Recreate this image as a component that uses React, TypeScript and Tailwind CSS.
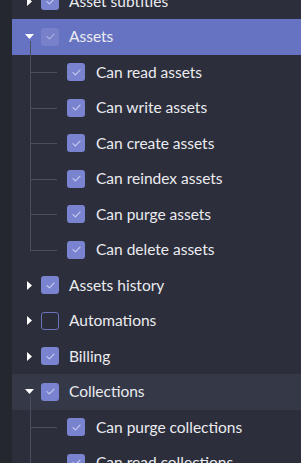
import React from "react";

interface Node {
  label: string;
  checked: boolean;
  caret?: "right" | "down";
  selected?: boolean;
  hover?: boolean;
  children?: string[];
}

const TREE: Node[] = [
  { label: "Asset subtitles", checked: true, caret: "right" },
  {
    label: "Assets",
    checked: true,
    caret: "down",
    selected: true,
    children: [
      "Can read assets",
      "Can write assets",
      "Can create assets",
      "Can reindex assets",
      "Can purge assets",
      "Can delete assets",
    ],
  },
  { label: "Assets history", checked: true, caret: "right" },
  { label: "Automations", checked: false, caret: "right" },
  { label: "Billing", checked: true, caret: "right" },
  {
    label: "Collections",
    checked: true,
    caret: "down",
    hover: true,
    children: ["Can purge collections", "Can read collections"],
  },
];

function Checkbox({ checked, onSelected }: { checked: boolean; onSelected?: boolean }) {
  if (!checked) {
    return (
      <span className="block w-[18px] h-[18px] rounded-[3px] border-[1.5px] border-[#6b73b9] bg-[#2a2d38] shrink-0" />
    );
  }
  return (
    <span
      className={
        "w-[18px] h-[18px] rounded-[3px] flex items-center justify-center shrink-0 " +
        (onSelected ? "bg-[#7780c9]" : "bg-[#7a83cf]")
      }
    >
      <svg width="9" height="7" viewBox="0 0 9 7" fill="none">
        <path
          d="M1 3.6 L3.4 5.8 L8 1.2"
          stroke={onSelected ? "#aeb4e4" : "#c9cdf0"}
          strokeWidth="1.1"
          strokeLinecap="round"
          strokeLinejoin="round"
        />
      </svg>
    </span>
  );
}

function Caret({ dir }: { dir: "right" | "down" }) {
  return dir === "right" ? (
    <svg width="5" height="9" viewBox="0 0 5 9">
      <path d="M0 0 L5 4.5 L0 9 Z" fill="#ffffff" />
    </svg>
  ) : (
    <svg width="9" height="5" viewBox="0 0 9 5">
      <path d="M0 0 L9 0 L4.5 5 Z" fill="#ffffff" />
    </svg>
  );
}

function GroupRow({ node }: { node: Node }) {
  const expanded = node.caret === "down";
  return (
    <div
      className={
        "relative h-[35.5px] flex items-center " +
        (node.selected ? "bg-[#6673c2]" : node.hover ? "bg-[#353947]" : "")
      }
    >
      {expanded && (
        <span className="absolute left-[18px] top-[22px] bottom-0 w-px bg-[#4a4f60]" />
      )}
      <div className="w-[12px]" />
      <div className="w-[10px] flex justify-center">
        {node.caret && <Caret dir={node.caret} />}
      </div>
      <div className="ml-[7px]">
        <Checkbox checked={node.checked} onSelected={node.selected} />
      </div>
      <span className="ml-[10px] text-[15.5px] text-[#ebebf0] whitespace-nowrap">{node.label}</span>
    </div>
  );
}

function ChildRow({ label, last }: { label: string; last: boolean }) {
  return (
    <div className="relative h-[35.5px] flex items-center pl-[55px]">
      <span
        className={
          "absolute left-[18px] top-0 w-px bg-[#4a4f60] " + (last ? "h-1/2" : "h-full")
        }
      />
      <span className="absolute left-[18px] top-1/2 w-[27px] h-px bg-[#4a4f60]" />
      <Checkbox checked />
      <span className="ml-[11px] text-[15.5px] text-[#ebebf0] whitespace-nowrap">{label}</span>
    </div>
  );
}

export default function App() {
  return (
    <div
      className="w-[301px] h-[463px] overflow-hidden flex bg-[#2c2f3b]"
      style={{ fontFamily: 'Lato, "Noto Sans", sans-serif' }}
    >
      <div className="w-[12px] shrink-0 bg-[#25272f]" />
      <div className="flex-1 -mt-[16.5px]">
        {TREE.map((node) => (
          <div key={node.label}>
            <GroupRow node={node} />
            {node.children?.map((c, i) => (
              <ChildRow key={c} label={c} last={i === node.children!.length - 1} />
            ))}
          </div>
        ))}
      </div>
    </div>
  );
}
